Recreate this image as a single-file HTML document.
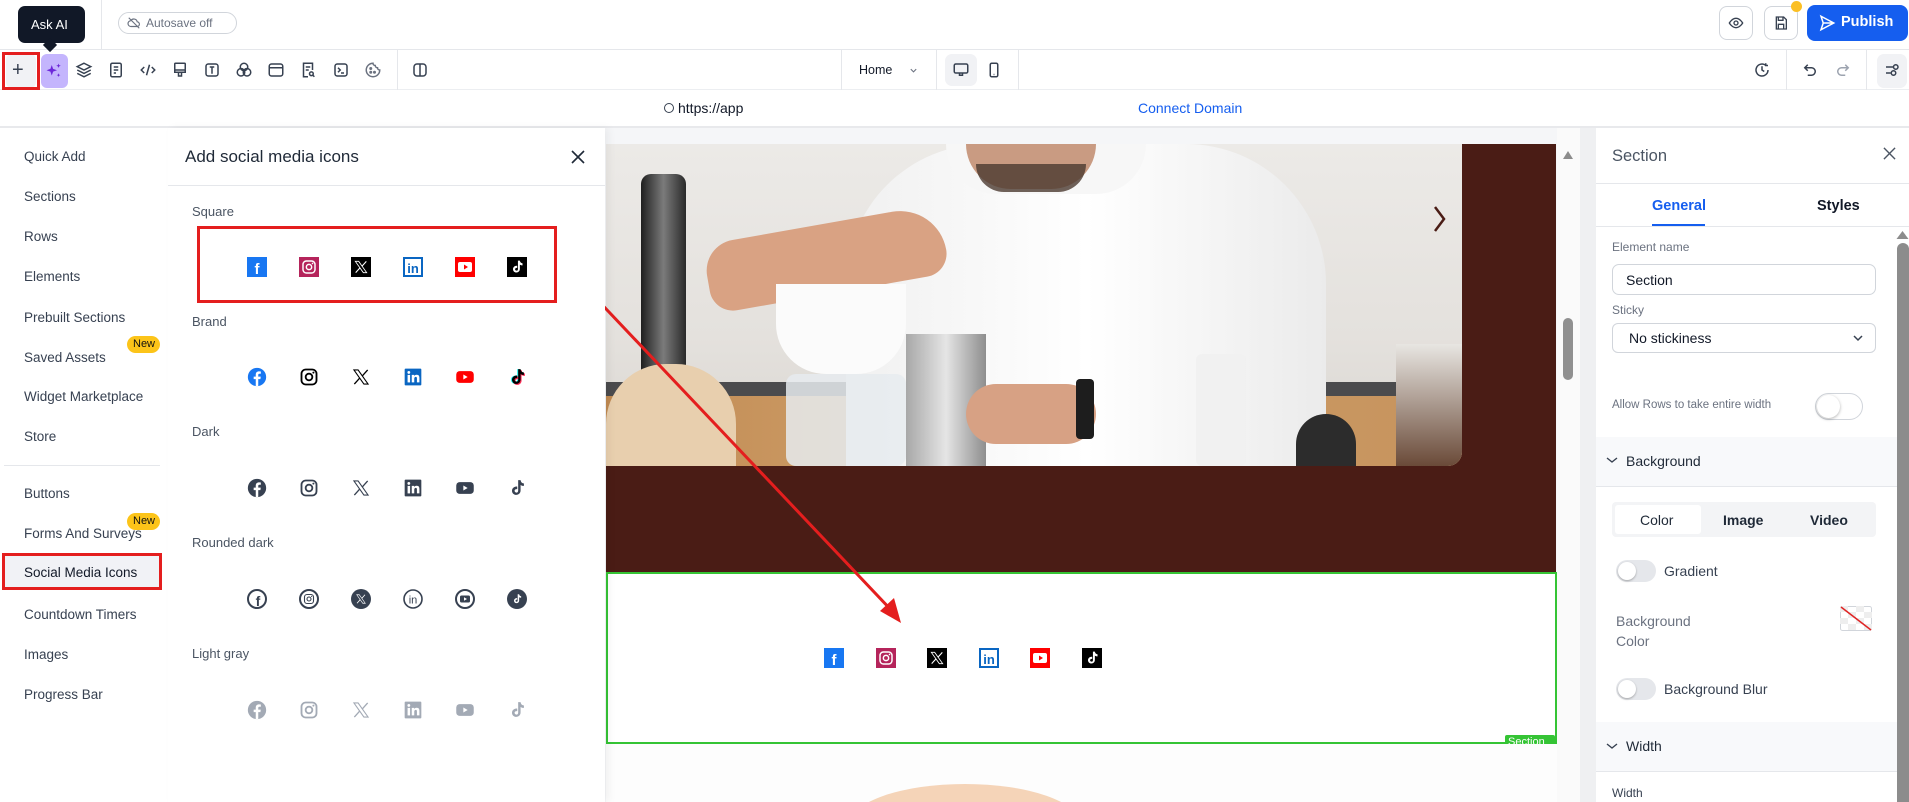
<!DOCTYPE html>
<html><head><meta charset="utf-8">
<style>
*{box-sizing:border-box;margin:0;padding:0}
html,body{width:1909px;height:802px;overflow:hidden}
body{font-family:"Liberation Sans",sans-serif;background:#fff;color:#374151}
#root{position:relative;width:1909px;height:802px;overflow:hidden}
.a{position:absolute}
.t{position:absolute;white-space:nowrap}
.nav{font-size:13.5px;color:#374151;left:24px}
.lbl{font-size:13px;color:#4b5563;left:192px}
.ic{position:absolute;width:20px;height:20px}
.tb{position:absolute;top:61px;width:18px;height:18px}
.sep{position:absolute;width:1px;background:#e5e7eb}
</style></head><body><div id="root">
<svg width="0" height="0" style="position:absolute">
<defs>
<symbol id="fb" viewBox="0 0 24 24"><circle cx="12" cy="12" r="11" fill="currentColor"/><path d="M13.5 23v-8.5h2.6l.4-3h-3V9.6c0-.9.3-1.5 1.5-1.5h1.6V5.4c-.3 0-1.2-.1-2.3-.1-2.3 0-3.8 1.4-3.8 3.9v2.3H8v3h2.5V23z" fill="#fff"/></symbol>
<symbol id="ig" viewBox="0 0 24 24"><rect x="3" y="3" width="18" height="18" rx="5" fill="none" stroke="currentColor" stroke-width="2.2"/><circle cx="12" cy="12" r="4" fill="none" stroke="currentColor" stroke-width="2.2"/><circle cx="17.3" cy="6.7" r="1.2" fill="currentColor"/></symbol>
<symbol id="xx" viewBox="0 0 24 24"><path d="M3.5 3.5h5l12 17h-5z" fill="none" stroke="currentColor" stroke-width="1.3"/><path d="M20 3.5l-6.6 7.4M10.6 13.1L4 20.5" stroke="currentColor" stroke-width="1.6"/></symbol>
<symbol id="in" viewBox="0 0 24 24"><rect x="2" y="2" width="20" height="20" rx="1" fill="currentColor"/><rect x="5.5" y="9.5" width="3" height="9" fill="#fff"/><circle cx="7" cy="6.5" r="1.7" fill="#fff"/><path d="M10.5 9.5h2.9v1.3c.5-.8 1.5-1.5 3-1.5 2.7 0 3.3 1.7 3.3 4v5.2h-3v-4.6c0-1.1-.2-2-1.4-2s-1.8.9-1.8 2.2v4.4h-3z" fill="#fff"/></symbol>
<symbol id="yt" viewBox="0 0 24 24"><rect x="1.5" y="5" width="21" height="14" rx="4" fill="currentColor"/><path d="M10 9v6l5.2-3z" fill="#fff"/></symbol>
<symbol id="tt" viewBox="0 0 24 24"><path d="M16.3 2.5c.3 2.3 1.7 3.8 4 4v3c-1.4.1-2.8-.3-4-1.1v6.5c0 3.6-3 6-6.3 5.3-2.4-.4-4.1-2.6-4-5 .1-3.2 3.1-5.5 6.3-4.9v3.1c-1.3-.4-3.1.2-3.2 1.8-.1 1.4 1.1 2.4 2.3 2.3 1.4 0 2-1.1 2-2.4V2.5z" fill="currentColor"/></symbol>
</defs></svg>

<!-- TOP BAR -->
<div class="a" style="left:0;top:0;width:1909px;height:50px;border-bottom:1px solid #e5e7eb"></div>
<div class="a" style="left:24px;top:20px;width:8px;height:8px;border-radius:50%;background:#374151"></div>
<div class="a" style="left:18px;top:6px;width:67px;height:37px;background:#111827;border-radius:7px"></div>
<div class="a" style="left:45px;top:40px;width:10px;height:10px;background:#111827;transform:rotate(45deg)"></div>
<div class="t" style="left:31px;top:17px;color:#fff;font-size:13px">Ask AI</div>
<div class="sep" style="left:101px;top:0;height:50px"></div>
<div class="a" style="left:118px;top:12px;width:119px;height:22px;border:1px solid #d1d5db;border-radius:11px"></div>
<svg class="a" style="left:127px;top:16px" width="14" height="14" viewBox="0 0 24 24" fill="none" stroke="#6b7280" stroke-width="2"><path d="M7 18h10a4 4 0 0 0 .5-8A6 6 0 0 0 6.5 8 5 5 0 0 0 7 18z"/><path d="M3 3l18 18"/></svg>
<div class="t" style="left:146px;top:16px;font-size:12px;color:#6b7280">Autosave off</div>
<div class="a" style="left:1719px;top:6px;width:34px;height:34px;border:1px solid #d1d5db;border-radius:8px"></div>
<svg class="a" style="left:1728px;top:15px" width="16" height="16" viewBox="0 0 24 24" fill="none" stroke="#374151" stroke-width="2"><path d="M2 12s4-7 10-7 10 7 10 7-4 7-10 7S2 12 2 12z"/><circle cx="12" cy="12" r="3"/></svg>
<div class="a" style="left:1764px;top:6px;width:34px;height:34px;border:1px solid #d1d5db;border-radius:8px"></div>
<svg class="a" style="left:1773px;top:15px" width="16" height="16" viewBox="0 0 24 24" fill="none" stroke="#374151" stroke-width="2"><path d="M5 3h11l4 4v14H5z"/><path d="M8 3v5h7V3M8 21v-7h8v7"/></svg>
<div class="a" style="left:1791px;top:1px;width:11px;height:11px;border-radius:50%;background:#fbbf24"></div>
<div class="a" style="left:1807px;top:5px;width:101px;height:36px;background:#155eef;border-radius:8px"></div>
<svg class="a" style="left:1818px;top:14px" width="18" height="18" viewBox="0 0 24 24" fill="none" stroke="#fff" stroke-width="2"><path d="M4 3l17 9-17 9 3-9z M7 12h14"/></svg>
<div class="t" style="left:1841px;top:14px;color:#fff;font-size:14.5px;font-weight:bold">Publish</div>

<!-- TOOLBAR -->
<div class="a" style="left:0;top:89px;width:1909px;height:1px;background:#eceef1"></div>
<div class="a" style="left:6px;top:54px;width:30px;height:34px;background:#f1f2f5;border-radius:6px"></div>
<div class="a" style="left:2px;top:52px;width:38px;height:38px;border:3px solid #e41e1e"></div>
<div class="t" style="left:12px;top:59px;font-size:20px;color:#374151">+</div>
<div class="a" style="left:41px;top:54px;width:27px;height:34px;background:#c4b5fd;border-radius:6px"></div>
<svg class="a" style="left:45px;top:62px" width="18" height="18" viewBox="0 0 24 24" fill="#6d28d9"><path d="M9 4l1.8 5.2L16 11l-5.2 1.8L9 18l-1.8-5.2L2 11l5.2-1.8z"/><path d="M18 2l.8 2.2L21 5l-2.2.8L18 8l-.8-2.2L15 5l2.2-.8zM18 15l.7 1.8 1.8.7-1.8.7L18 20l-.7-1.8-1.8-.7 1.8-.7z"/></svg>
<svg class="tb" style="left:75px" viewBox="0 0 24 24" fill="none" stroke="#374151" stroke-width="2"><path d="M12 3l9 4.5-9 4.5-9-4.5z M3 12l9 4.5 9-4.5 M3 16.5l9 4.5 9-4.5"/></svg>
<svg class="tb" style="left:107px" viewBox="0 0 24 24" fill="none" stroke="#374151" stroke-width="2"><rect x="5" y="3" width="14" height="18" rx="2"/><path d="M9 8h6M9 12h6M9 16h3"/></svg>
<svg class="tb" style="left:139px" viewBox="0 0 24 24" fill="none" stroke="#374151" stroke-width="2"><path d="M7 8l-4 4 4 4M17 8l4 4-4 4M14 5l-4 14"/></svg>
<svg class="tb" style="left:171px" viewBox="0 0 24 24" fill="none" stroke="#374151" stroke-width="2"><rect x="5" y="3" width="14" height="9" rx="1"/><path d="M5 12v3h14v-3M10 15v5h4v-5"/></svg>
<svg class="tb" style="left:203px" viewBox="0 0 24 24" fill="none" stroke="#374151" stroke-width="2"><rect x="4" y="4" width="16" height="16" rx="3"/><path d="M9 8h6M12 8v9"/></svg>
<svg class="tb" style="left:235px" viewBox="0 0 24 24" fill="none" stroke="#374151" stroke-width="2"><circle cx="12" cy="8" r="5"/><circle cx="8" cy="15" r="5"/><circle cx="16" cy="15" r="5"/></svg>
<svg class="tb" style="left:267px" viewBox="0 0 24 24" fill="none" stroke="#374151" stroke-width="2"><rect x="3" y="4" width="18" height="16" rx="3"/><path d="M3 9h18"/></svg>
<svg class="tb" style="left:299px" viewBox="0 0 24 24" fill="none" stroke="#374151" stroke-width="2"><path d="M12 21H6V3h12v9"/><path d="M9 8h6M9 12h4"/><circle cx="16.5" cy="17" r="2.5"/><path d="M18.5 19l2 2"/></svg>
<svg class="tb" style="left:332px" viewBox="0 0 24 24" fill="none" stroke="#374151" stroke-width="2"><rect x="4" y="4" width="16" height="16" rx="3"/><path d="M8 9l3 3-3 3M12 16h4"/></svg>
<svg class="tb" style="left:364px" viewBox="0 0 24 24" fill="none" stroke="#6b7280" stroke-width="2"><path d="M12 3a9 9 0 1 0 9 9 3 3 0 0 1-3-3 3 3 0 0 1-3-3 3 3 0 0 1-3-3z"/><circle cx="9" cy="10" r="1"/><circle cx="9" cy="15" r="1"/><circle cx="14" cy="15" r="1"/></svg>
<div class="sep" style="left:397px;top:50px;height:40px"></div>
<svg class="tb" style="left:411px" viewBox="0 0 24 24" fill="none" stroke="#374151" stroke-width="2"><rect x="4" y="4" width="16" height="16" rx="4"/><path d="M12 4v16"/></svg>
<div class="sep" style="left:841px;top:50px;height:40px"></div>
<div class="t" style="left:859px;top:63px;font-size:12.5px;color:#111827">Home</div>
<svg class="a" style="left:909px;top:66px" width="9" height="9" viewBox="0 0 10 10" fill="none" stroke="#6b7280" stroke-width="1.2"><path d="M2 3.5l3 3 3-3"/></svg>
<div class="sep" style="left:936px;top:50px;height:40px"></div>
<div class="a" style="left:945px;top:54px;width:32px;height:32px;background:#f1f2f5;border-radius:7px"></div>
<svg class="tb" style="left:952px" viewBox="0 0 24 24" fill="none" stroke="#374151" stroke-width="2"><rect x="3" y="4" width="18" height="12" rx="2"/><path d="M10 16v3h4v-3"/></svg>
<svg class="tb" style="left:985px" viewBox="0 0 24 24" fill="none" stroke="#374151" stroke-width="2"><rect x="7" y="3" width="10" height="18" rx="2"/><path d="M11.5 18h1"/></svg>
<div class="sep" style="left:1018px;top:50px;height:40px"></div>
<svg class="tb" style="left:1753px" viewBox="0 0 24 24" fill="none" stroke="#374151" stroke-width="2"><path d="M20 12a8 8 0 1 1-3-6.2"/><path d="M12 7v5l3 2M17 3v3h3"/></svg>
<div class="sep" style="left:1786px;top:50px;height:40px"></div>
<svg class="tb" style="left:1801px" viewBox="0 0 24 24" fill="none" stroke="#374151" stroke-width="2"><path d="M9 5L5 9l4 4"/><path d="M5 9h9a5 5 0 0 1 0 10H9"/></svg>
<svg class="tb" style="left:1834px" viewBox="0 0 24 24" fill="none" stroke="#9ca3af" stroke-width="2"><path d="M15 5l4 4-4 4"/><path d="M19 9h-9a5 5 0 0 0 0 10h5"/></svg>
<div class="sep" style="left:1866px;top:50px;height:40px"></div>
<div class="a" style="left:1877px;top:54px;width:30px;height:34px;background:#f1f2f5;border-radius:7px"></div>
<svg class="tb" style="left:1883px" viewBox="0 0 24 24" fill="none" stroke="#374151" stroke-width="2"><path d="M4 8h10M4 16h6"/><circle cx="17" cy="8" r="3"/><circle cx="14" cy="16" r="3"/></svg>

<!-- URL ROW -->
<div class="a" style="left:0;top:126px;width:1909px;height:2px;background:#e8e9ec"></div>
<div class="a" style="left:664px;top:103px;width:10px;height:10px;border:1px solid #374151;border-radius:50%"></div>
<div class="t" style="left:678px;top:100px;font-size:14px;color:#111827;width:72px;overflow:hidden">https://app</div>
<div class="t" style="left:1138px;top:100px;font-size:14px;color:#155eef">Connect Domain</div>

<!-- CANVAS -->
<div class="a" style="left:600px;top:128px;width:996px;height:674px;background:#f5f6f8"></div>
<div class="a" style="left:606px;top:144px;width:950px;height:428px;background:#4a1c15"></div>
<div class="a" style="left:606px;top:144px;width:856px;height:322px;border-bottom-right-radius:14px;overflow:hidden;background:linear-gradient(#eceae7,#e4e1dd 60%,#d9d5d0)">
  <div class="a" style="left:0;top:238px;width:856px;height:14px;background:#4b4b4d"></div>
  <div class="a" style="left:0;top:252px;width:856px;height:70px;background:linear-gradient(90deg,#c08a52,#d0a06b 40%,#c6935d)"></div>
  <div class="a" style="left:35px;top:30px;width:45px;height:200px;background:linear-gradient(90deg,#1f1f1f,#7b7b7b,#2a2a2a);border-radius:10px 10px 0 0"></div>
  <div class="a" style="left:240px;top:0;width:480px;height:322px;background:linear-gradient(90deg,#f0f0f0,#ffffff 50%,#ebebeb);border-radius:140px 140px 0 0"></div>
  <div class="a" style="left:340px;top:0;width:200px;height:50px;background:#f7f7f7;border-radius:0 0 100px 100px"></div>
  <div class="a" style="left:360px;top:0;width:130px;height:45px;background:#c99b82;border-radius:0 0 60px 60px"></div>
  <div class="a" style="left:370px;top:20px;width:110px;height:28px;background:#4b3a30;border-radius:0 0 50px 50px;opacity:.8"></div>
  <div class="a" style="left:100px;top:80px;width:240px;height:70px;background:#d9a283;border-radius:40px 60px 30px 30px;transform:rotate(-10deg)"></div>
  <div class="a" style="left:170px;top:140px;width:130px;height:90px;background:#fbfbfb;border-radius:0 0 50px 50px"></div>
  <div class="a" style="left:180px;top:230px;width:120px;height:92px;background:rgba(230,235,238,.85);border-radius:10px"></div>
  <div class="a" style="left:0;top:220px;width:130px;height:102px;background:#e8cfae;border-radius:60px 60px 0 0"></div>
  <div class="a" style="left:300px;top:190px;width:80px;height:132px;background:linear-gradient(90deg,#a8a8a8,#e5e5e5,#8e8e8e)"></div>
  <div class="a" style="left:360px;top:240px;width:130px;height:60px;background:#d7a184;border-radius:30px"></div>
  <div class="a" style="left:470px;top:235px;width:18px;height:60px;background:#1d1d1d;border-radius:4px"></div>
  <div class="a" style="left:590px;top:210px;width:50px;height:112px;background:rgba(240,240,240,.8);border-radius:6px"></div>
  <div class="a" style="left:690px;top:270px;width:60px;height:52px;background:#2c2c2c;border-radius:30px 30px 0 0"></div>
  <div class="a" style="left:790px;top:200px;width:66px;height:122px;background:linear-gradient(#e8e6e2,#6a4a38)"></div>
</div>
<svg class="a" style="left:1432px;top:204px" width="16" height="30" viewBox="0 0 16 30" fill="none" stroke="#4a1c15" stroke-width="2.5"><path d="M3 3l9 12-9 12"/></svg>
<div class="a" style="left:606px;top:572px;width:951px;height:172px;background:#fff;border:2px solid #35c435"></div>
<div class="a" style="left:1505px;top:735px;width:50px;height:15px;background:#35c435;border-radius:2px;overflow:hidden;color:#fff;font-size:11px;line-height:15px;padding-left:3px">Section</div>
<div class="a" style="left:606px;top:744px;width:951px;height:58px;background:#fdfdfd;overflow:hidden">
  <div class="a" style="left:244px;top:40px;width:230px;height:80px;border-radius:50%;background:#f5d4b8"></div>
</div>
<div class="a" style="left:1557px;top:128px;width:23px;height:674px;background:#fafafa"></div>
<svg class="a" style="left:1562px;top:150px" width="12" height="10" viewBox="0 0 12 10"><path d="M6 1l5 8H1z" fill="#8c8c8c"/></svg>
<div class="a" style="left:1563px;top:318px;width:10px;height:62px;border-radius:5px;background:#909090"></div>
<div class="a" style="left:1580px;top:128px;width:16px;height:674px;background:#eff0f2"></div>
<!-- canvas icons -->
<svg class="ic" style="left:824px;top:648px" viewBox="0 0 20 20"><rect width="20" height="20" fill="#1877f2"/><text x="10" y="17" font-family="Liberation Sans" font-weight="bold" font-size="15" fill="#fff" text-anchor="middle">f</text></svg>
<svg class="ic" style="left:876px;top:648px" viewBox="0 0 20 20"><rect width="20" height="20" fill="#b5245b"/><svg x="2" y="2" width="16" height="16" color="#fff"><use href="#ig"/></svg></svg>
<svg class="ic" style="left:927px;top:648px" viewBox="0 0 20 20"><rect width="20" height="20" fill="#000"/><svg x="2" y="2" width="16" height="16" color="#fff"><use href="#xx"/></svg></svg>
<svg class="ic" style="left:979px;top:648px" viewBox="0 0 20 20"><rect x="1" y="1" width="18" height="18" fill="#fff" stroke="#0a66c2" stroke-width="2"/><text x="10" y="16" font-family="Liberation Sans" font-weight="bold" font-size="13" fill="#0a66c2" text-anchor="middle">in</text></svg>
<svg class="ic" style="left:1030px;top:648px" viewBox="0 0 20 20"><rect width="20" height="20" fill="#f00"/><rect x="3" y="5" width="14" height="10" rx="2" fill="#fff"/><path d="M9 7.5v5l4-2.5z" fill="#f00"/></svg>
<svg class="ic" style="left:1082px;top:648px" viewBox="0 0 20 20"><rect width="20" height="20" fill="#000"/><svg x="2" y="2" width="16" height="16" color="#fff"><use href="#tt"/></svg></svg>
<!-- red arrow -->
<svg class="a" style="left:0;top:0" width="1909" height="802"><line x1="556" y1="256" x2="893" y2="612" stroke="#e41e1e" stroke-width="3"/><path d="M901 623L880 611 894 598z" fill="#e41e1e"/></svg>

<!-- LEFT NAV -->
<div class="a" style="left:0;top:128px;width:168px;height:674px;background:#fff"></div>
<div class="t nav" style="top:149px">Quick Add</div>
<div class="t nav" style="top:189px">Sections</div>
<div class="t nav" style="top:229px">Rows</div>
<div class="t nav" style="top:269px">Elements</div>
<div class="t nav" style="top:310px">Prebuilt Sections</div>
<div class="t nav" style="top:350px">Saved Assets</div>
<div class="a" style="left:127px;top:336px;width:33px;height:17px;border-radius:9px;background:#fcc419"></div>
<div class="t" style="left:133px;top:338px;font-size:11px;color:#111">New</div>
<div class="t nav" style="top:389px">Widget Marketplace</div>
<div class="t nav" style="top:429px">Store</div>
<div class="a" style="left:4px;top:465px;width:156px;height:1px;background:#e5e7eb"></div>
<div class="t nav" style="top:486px">Buttons</div>
<div class="a" style="left:127px;top:513px;width:33px;height:17px;border-radius:9px;background:#fcc419"></div>
<div class="t" style="left:133px;top:515px;font-size:11px;color:#111">New</div>
<div class="t nav" style="top:526px">Forms And Surveys</div>
<div class="a" style="left:4px;top:553px;width:156px;height:37px;background:#f1f2f6"></div>
<div class="a" style="left:2px;top:553px;width:160px;height:37px;border:3px solid #e41e1e"></div>
<div class="t nav" style="top:565px;color:#111827">Social Media Icons</div>
<div class="t nav" style="top:607px">Countdown Timers</div>
<div class="t nav" style="top:647px">Images</div>
<div class="t nav" style="top:687px">Progress Bar</div>

<!-- PANEL -->
<div class="a" style="left:168px;top:128px;width:437px;height:674px;background:#fff;box-shadow:4px 0 8px rgba(0,0,0,.05)"></div>
<div class="t" style="left:185px;top:147px;font-size:17px;color:#1f2937">Add social media icons</div>
<svg class="a" style="left:571px;top:150px" width="14" height="14" viewBox="0 0 14 14" stroke="#1f2937" stroke-width="1.6"><path d="M1 1l12 12M13 1L1 13"/></svg>
<div class="a" style="left:168px;top:185px;width:437px;height:1px;background:#e5e7eb"></div>
<div class="t lbl" style="top:204px">Square</div>
<div class="a" style="left:197px;top:226px;width:360px;height:77px;border:3px solid #e41e1e"></div>
<svg class="ic" style="left:247px;top:257px" viewBox="0 0 20 20"><rect width="20" height="20" fill="#1877f2"/><text x="10" y="17" font-family="Liberation Sans" font-weight="bold" font-size="15" fill="#fff" text-anchor="middle">f</text></svg>
<svg class="ic" style="left:299px;top:257px" viewBox="0 0 20 20"><rect width="20" height="20" fill="#b5245b"/><svg x="2" y="2" width="16" height="16" color="#fff"><use href="#ig"/></svg></svg>
<svg class="ic" style="left:351px;top:257px" viewBox="0 0 20 20"><rect width="20" height="20" fill="#000"/><svg x="2" y="2" width="16" height="16" color="#fff"><use href="#xx"/></svg></svg>
<svg class="ic" style="left:403px;top:257px" viewBox="0 0 20 20"><rect x="1" y="1" width="18" height="18" fill="#fff" stroke="#0a66c2" stroke-width="2"/><text x="10" y="16" font-family="Liberation Sans" font-weight="bold" font-size="13" fill="#0a66c2" text-anchor="middle">in</text></svg>
<svg class="ic" style="left:455px;top:257px" viewBox="0 0 20 20"><rect width="20" height="20" fill="#f00"/><rect x="3" y="5" width="14" height="10" rx="2" fill="#fff"/><path d="M9 7.5v5l4-2.5z" fill="#f00"/></svg>
<svg class="ic" style="left:507px;top:257px" viewBox="0 0 20 20"><rect width="20" height="20" fill="#000"/><svg x="2" y="2" width="16" height="16" color="#fff"><use href="#tt"/></svg></svg>

<div class="t lbl" style="top:314px">Brand</div>
<svg class="ic" style="left:247px;top:367px;color:#1877f2"><use href="#fb"/></svg>
<svg class="ic" style="left:299px;top:367px;color:#000"><use href="#ig"/></svg>
<svg class="ic" style="left:351px;top:367px;color:#000"><use href="#xx"/></svg>
<svg class="ic" style="left:403px;top:367px;color:#0a66c2"><use href="#in"/></svg>
<svg class="ic" style="left:455px;top:367px;color:#f00"><use href="#yt"/></svg>
<svg class="ic" style="left:507px;top:367px"><g transform="translate(-1,0)" color="#25f4ee"><use href="#tt" width="20" height="20"/></g><g transform="translate(1,1)" color="#fe2c55"><use href="#tt" width="20" height="20"/></g><g color="#000"><use href="#tt" width="20" height="20"/></g></svg>

<div class="t lbl" style="top:424px">Dark</div>
<svg class="ic" style="left:247px;top:478px;color:#374151"><use href="#fb"/></svg>
<svg class="ic" style="left:299px;top:478px;color:#374151"><use href="#ig"/></svg>
<svg class="ic" style="left:351px;top:478px;color:#374151"><use href="#xx"/></svg>
<svg class="ic" style="left:403px;top:478px;color:#374151"><use href="#in"/></svg>
<svg class="ic" style="left:455px;top:478px;color:#374151"><use href="#yt"/></svg>
<svg class="ic" style="left:507px;top:478px;color:#374151"><use href="#tt"/></svg>

<div class="t lbl" style="top:535px">Rounded dark</div>
<svg class="ic" style="left:247px;top:589px" viewBox="0 0 20 20"><circle cx="10" cy="10" r="9" fill="none" stroke="#374151" stroke-width="2"/><text x="11" y="17" font-family="Liberation Sans" font-weight="bold" font-size="14" fill="#374151" text-anchor="middle">f</text></svg>
<svg class="ic" style="left:299px;top:589px" viewBox="0 0 20 20"><circle cx="10" cy="10" r="9" fill="none" stroke="#374151" stroke-width="2"/><svg x="4" y="4" width="12" height="12" color="#374151"><use href="#ig"/></svg></svg>
<svg class="ic" style="left:351px;top:589px" viewBox="0 0 20 20"><circle cx="10" cy="10" r="10" fill="#374151"/><svg x="4" y="4" width="12" height="12" color="#fff"><use href="#xx"/></svg></svg>
<svg class="ic" style="left:403px;top:589px" viewBox="0 0 20 20"><circle cx="10" cy="10" r="9" fill="none" stroke="#374151" stroke-width="1.6"/><text x="10" y="14.5" font-family="Liberation Sans" font-size="11" fill="#374151" text-anchor="middle">in</text></svg>
<svg class="ic" style="left:455px;top:589px" viewBox="0 0 20 20"><circle cx="10" cy="10" r="9" fill="none" stroke="#374151" stroke-width="2"/><rect x="5" y="6.5" width="10" height="7" rx="1.5" fill="#374151"/><path d="M9 8.2v3.6l3-1.8z" fill="#fff"/></svg>
<svg class="ic" style="left:507px;top:589px" viewBox="0 0 20 20"><circle cx="10" cy="10" r="10" fill="#374151"/><svg x="4" y="4" width="12" height="12" color="#fff"><use href="#tt"/></svg></svg>

<div class="t lbl" style="top:646px">Light gray</div>
<svg class="ic" style="left:247px;top:700px;color:#a3aab5"><use href="#fb"/></svg>
<svg class="ic" style="left:299px;top:700px;color:#a3aab5"><use href="#ig"/></svg>
<svg class="ic" style="left:351px;top:700px;color:#a3aab5"><use href="#xx"/></svg>
<svg class="ic" style="left:403px;top:700px;color:#a3aab5"><use href="#in"/></svg>
<svg class="ic" style="left:455px;top:700px;color:#a3aab5"><use href="#yt"/></svg>
<svg class="ic" style="left:507px;top:700px;color:#a3aab5"><use href="#tt"/></svg>

<!-- RIGHT PANEL -->
<div class="a" style="left:1596px;top:128px;width:313px;height:674px;background:#fff"></div>
<div class="t" style="left:1612px;top:147px;font-size:16.5px;color:#4b5563">Section</div>
<svg class="a" style="left:1883px;top:147px" width="13" height="13" viewBox="0 0 14 14" stroke="#4b5563" stroke-width="1.5"><path d="M1 1l12 12M13 1L1 13"/></svg>
<div class="a" style="left:1596px;top:183px;width:313px;height:1px;background:#e5e7eb"></div>
<div class="t" style="left:1652px;top:198px;font-size:14.5px;color:#155eef;font-weight:bold">General</div>
<div class="a" style="left:1652px;top:224px;width:53px;height:2px;background:#155eef"></div>
<div class="t" style="left:1817px;top:198px;font-size:14.5px;color:#111827;font-weight:bold">Styles</div>
<div class="a" style="left:1596px;top:226px;width:313px;height:1px;background:#e5e7eb"></div>
<div class="t" style="left:1612px;top:240px;font-size:12px;color:#6b7280">Element name</div>
<div class="a" style="left:1612px;top:264px;width:264px;height:31px;border:1px solid #d1d5db;border-radius:7px"></div>
<div class="t" style="left:1626px;top:272px;font-size:14px;color:#111827">Section</div>
<div class="t" style="left:1612px;top:303px;font-size:12px;color:#6b7280">Sticky</div>
<div class="a" style="left:1612px;top:323px;width:264px;height:30px;border:1px solid #d1d5db;border-radius:6px"></div>
<div class="t" style="left:1629px;top:330px;font-size:14px;color:#111827">No stickiness</div>
<svg class="a" style="left:1852px;top:333px" width="12" height="10" viewBox="0 0 12 10" fill="none" stroke="#374151" stroke-width="1.5"><path d="M2 3l4 4 4-4"/></svg>
<div class="t" style="left:1612px;top:399px;font-size:11.5px;color:#6b7280">Allow Rows to take entire width</div>
<div class="a" style="left:1815px;top:393px;width:48px;height:27px;border:1px solid #d1d5db;border-radius:14px"></div>
<div class="a" style="left:1817px;top:395px;width:23px;height:23px;border-radius:50%;background:#fff;box-shadow:0 1px 3px rgba(0,0,0,.3)"></div>
<div class="a" style="left:1596px;top:437px;width:306px;height:50px;background:#f8f9fb;border-bottom:1px solid #e5e7eb"></div>
<svg class="a" style="left:1606px;top:455px" width="12" height="10" viewBox="0 0 12 10" fill="none" stroke="#374151" stroke-width="1.4"><path d="M1 3l5 4 5-4"/></svg>
<div class="t" style="left:1626px;top:453px;font-size:14px;color:#1f2937">Background</div>
<div class="a" style="left:1612px;top:502px;width:264px;height:35px;background:#f3f4f6;border-radius:4px"></div>
<div class="a" style="left:1615px;top:505px;width:86px;height:29px;background:#fff;border-radius:3px"></div>
<div class="t" style="left:1640px;top:512px;font-size:14px;color:#1f2937">Color</div>
<div class="t" style="left:1723px;top:512px;font-size:14px;color:#1f2937;font-weight:bold">Image</div>
<div class="t" style="left:1810px;top:512px;font-size:14px;color:#1f2937;font-weight:bold">Video</div>
<div class="a" style="left:1616px;top:560px;width:40px;height:22px;border-radius:11px;background:#e5e7eb"></div>
<div class="a" style="left:1618px;top:562px;width:18px;height:18px;border-radius:50%;background:#fff;box-shadow:0 1px 2px rgba(0,0,0,.3)"></div>
<div class="t" style="left:1664px;top:563px;font-size:14px;color:#374151">Gradient</div>
<div class="t" style="left:1616px;top:613px;font-size:14px;color:#6b7280">Background</div>
<div class="t" style="left:1616px;top:633px;font-size:14px;color:#6b7280">Color</div>
<svg class="a" style="left:1840px;top:606px" width="32" height="25" viewBox="0 0 32 25"><rect x=".5" y=".5" width="31" height="24" rx="2" fill="#fff" stroke="#d1d5db"/><path d="M0 0h8v6H0zM16 0h8v6h-8zM8 6h8v6H8zM24 6h8v6h-8zM0 12h8v6H0zM16 12h8v6h-8zM8 18h8v6H8zM24 18h8v6h-8z" fill="#eee"/><line x1="1" y1="1" x2="31" y2="24" stroke="#e02424" stroke-width="1.5"/></svg>
<div class="a" style="left:1616px;top:678px;width:40px;height:22px;border-radius:11px;background:#e5e7eb"></div>
<div class="a" style="left:1618px;top:680px;width:18px;height:18px;border-radius:50%;background:#fff;box-shadow:0 1px 2px rgba(0,0,0,.3)"></div>
<div class="t" style="left:1664px;top:681px;font-size:14px;color:#374151">Background Blur</div>
<div class="a" style="left:1596px;top:722px;width:306px;height:50px;background:#f8f9fb;border-bottom:1px solid #e5e7eb"></div>
<svg class="a" style="left:1606px;top:741px" width="12" height="10" viewBox="0 0 12 10" fill="none" stroke="#374151" stroke-width="1.4"><path d="M1 3l5 4 5-4"/></svg>
<div class="t" style="left:1626px;top:738px;font-size:14px;color:#1f2937">Width</div>
<div class="t" style="left:1612px;top:786px;font-size:12px;line-height:14px;color:#374151">Width</div>
<svg class="a" style="left:1896px;top:230px" width="13" height="10" viewBox="0 0 13 10"><path d="M6.5 1l6 8H.5z" fill="#8c8c8c"/></svg>
<div class="a" style="left:1897px;top:243px;width:12px;height:559px;border-radius:6px 6px 0 0;background:#8c8c8c"></div>
</div></body></html>
